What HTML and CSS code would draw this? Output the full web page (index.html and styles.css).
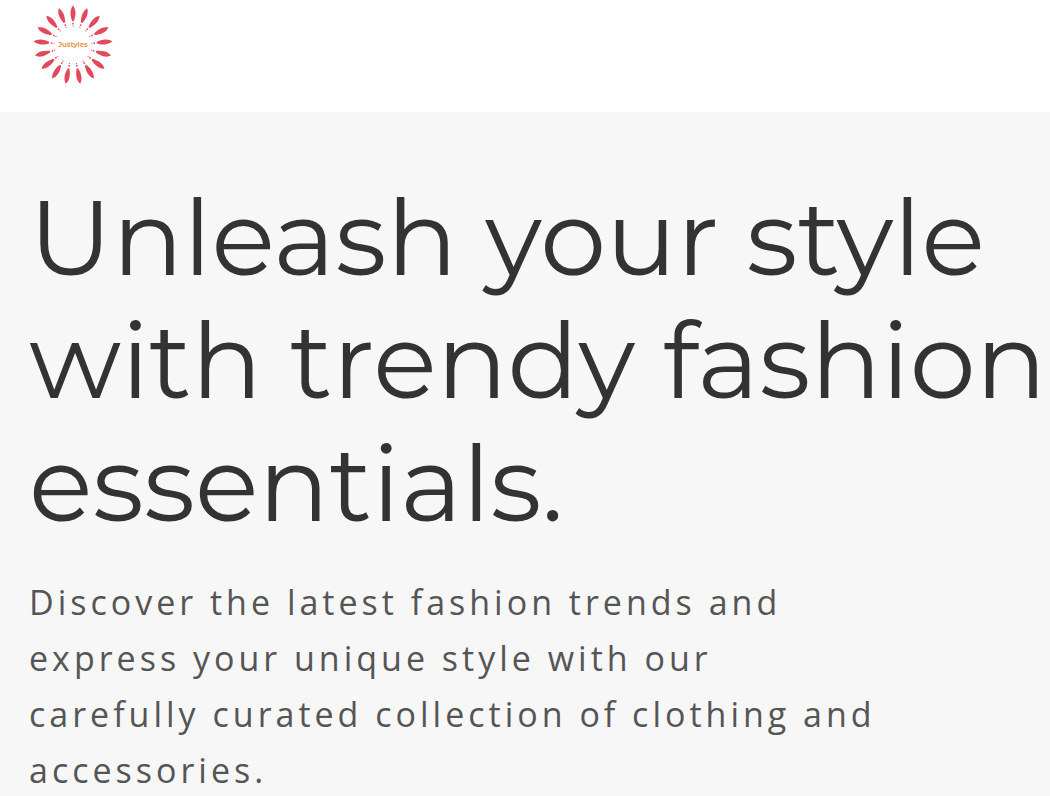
FILE: index.html
```html
<!DOCTYPE html>
<html lang="en">
<head>
<meta charset="utf-8">
<meta name="viewport" content="width=device-width, initial-scale=1">
<title>Justyles</title>
<link rel="stylesheet" href="styles.css">
</head>
<body>
<header class="site-header">
  <a class="logo" href="#" aria-label="Justyles">
    <svg class="logo-mark" viewBox="-40 -40 80 80">
      <defs>
        <g id="petal">
          <path d="M0 -39.5C1.5 -37.500 2.500 -35 2.500 -32C2.500 -28.500 1.400 -25.500 .8 -23.800H-.8C-1.400 -25.500 -2.500 -28.500 -2.500 -32C-2.500 -35 -1.500 -37.500 0 -39.500Z"/>
          <circle cy="-21.300" r=".9"/>
          <circle cy="-19" r=".6"/>
        </g>
      </defs>
      <g class="petals">
        <use href="#petal"/>
        <use href="#petal" transform="rotate(21.18)"/>
        <use href="#petal" transform="rotate(42.35)"/>
        <use href="#petal" transform="rotate(63.53)"/>
        <use href="#petal" transform="rotate(84.71)"/>
        <use href="#petal" transform="rotate(105.88)"/>
        <use href="#petal" transform="rotate(127.06)"/>
        <use href="#petal" transform="rotate(148.24)"/>
        <use href="#petal" transform="rotate(169.41)"/>
        <use href="#petal" transform="rotate(190.59)"/>
        <use href="#petal" transform="rotate(211.76)"/>
        <use href="#petal" transform="rotate(232.94)"/>
        <use href="#petal" transform="rotate(254.12)"/>
        <use href="#petal" transform="rotate(275.29)"/>
        <use href="#petal" transform="rotate(296.47)"/>
        <use href="#petal" transform="rotate(317.65)"/>
        <use href="#petal" transform="rotate(338.82)"/>
      </g>
      <text class="logo-name" x="0" y="2" text-anchor="middle">Justyles</text>
    </svg>
  </a>
</header>
<main class="hero">
  <h1 class="hero-title">Unleash your style<br>with trendy fashion<br>essentials.</h1>
  <p class="hero-text">Discover the latest fashion trends and express your unique style with our carefully curated collection of clothing and accessories.</p>
</main>
</body>
</html>
```
FILE: styles.css
```css
* {
  box-sizing: border-box;
}

body {
  margin: 0;
  background: #f7f7f7;
  font-family: "Open Sans", "Noto Sans", sans-serif;
}

.site-header {
  padding: 5px 33px 27px;
  background: #fff;
}

.logo {
  display: block;
  width: 80px;
}

.logo-mark {
  display: block;
  width: 80px;
  height: 80px;
}

.petals {
  fill: #e14a5c;
}

.logo-name {
  fill: #e59a50;
  font: 700 7px Montserrat, Inter, sans-serif;
}

.hero {
  padding: 64px 0 0 29px;
}

.hero-title {
  margin: 0;
  color: #333;
  font: 400 105px/123px Montserrat, Inter, "Open Sans", sans-serif;
  white-space: nowrap;
}

.hero-text {
  max-width: 860px;
  margin: 29px 0 0;
  color: #555;
  font-size: 34px;
  line-height: 56px;
  letter-spacing: 4px;
}
```
